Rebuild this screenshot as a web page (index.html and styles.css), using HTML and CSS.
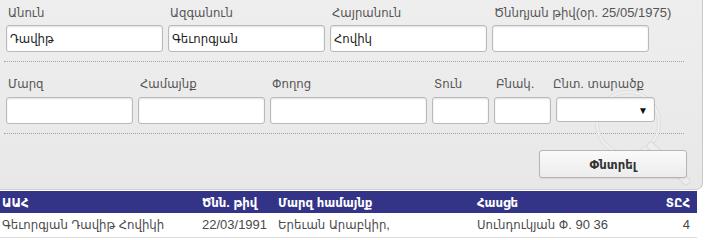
FILE: index.html
```html
<!DOCTYPE html>
<html lang="hy">
<head>
<meta charset="utf-8">
<title>Որոնում</title>
<link rel="stylesheet" href="styles.css">
</head>
<body>
<div class="panel">
  <svg class="watermark" width="110" height="110" viewBox="0 0 110 110" aria-hidden="true">
    <circle cx="40" cy="40" r="31" fill="none" stroke="#dadada" stroke-width="4"/>
    <circle cx="40" cy="40" r="31" fill="none" stroke="#f2f2f2" stroke-width="2"/>
    <line x1="63" y1="63" x2="98" y2="98" stroke="#dadada" stroke-width="9" stroke-linecap="round"/>
    <line x1="63" y1="63" x2="98" y2="98" stroke="#efefef" stroke-width="6" stroke-linecap="round"/>
  </svg>
  <div class="row row1">
    <div class="field w157"><label>Անուն</label><div class="input">Դավիթ</div></div>
    <div class="field w157"><label>Ազգանուն</label><div class="input">Գեւորգյան</div></div>
    <div class="field w157"><label>Հայրանուն</label><div class="input">Հովիկ</div></div>
    <div class="field w157"><label>Ծննդյան թիվ(օր. 25/05/1975)</label><div class="input"></div></div>
  </div>
  <div class="sep"></div>
  <div class="row row2">
    <div class="field w127"><label>Մարզ</label><div class="input"></div></div>
    <div class="field w127"><label>Համայնք</label><div class="input"></div></div>
    <div class="field w157"><label>Փողոց</label><div class="input"></div></div>
    <div class="field w57"><label>Տուն</label><div class="input"></div></div>
    <div class="field w57"><label>Բնակ.</label><div class="input"></div></div>
    <div class="field w99"><label class="sel-label">Ընտ. տարածք</label><div class="select"><span class="arrow">▼</span></div></div>
  </div>
  <div class="sep"></div>
  <div class="actions"><button class="btn">Փնտրել</button></div>
</div>
<table class="results">
  <colgroup>
    <col class="c1"><col class="c2"><col class="c3"><col class="c4"><col class="c5">
  </colgroup>
  <thead>
    <tr><th>ԱԱՀ</th><th>Ծնն. թիվ</th><th>Մարզ համայնք</th><th>Հասցե</th><th class="num">ՏԸՀ</th></tr>
  </thead>
  <tbody>
    <tr><td>Գեւորգյան Դավիթ Հովիկի</td><td>22/03/1991</td><td>Երեւան Արաբկիր,</td><td>Սունդուկյան Փ. 90 36</td><td class="num">4</td></tr>
  </tbody>
</table>
</body>
</html>
```
FILE: styles.css
```css
* { box-sizing: border-box; }
body {
  margin: 0;
  font-family: "Liberation Sans", "DejaVu Sans Condensed", "DejaVu Sans", sans-serif;
  font-size: 13px;
  color: #444;
  background: #fff;
}
.panel {
  position: relative;
  width: 703px;
  height: 190px;
  background: linear-gradient(#eeeeee, #e8e8e8);
  border-right: 1px solid #c8c8c8;
  border-bottom: 1px solid #cfcfcf;
  border-bottom-right-radius: 7px;
  overflow: hidden;
}
.watermark {
  position: absolute;
  left: 588px;
  top: 83px;
  opacity: 0.75;
}
.row {
  position: relative;
  display: flex;
  gap: 5px;
  padding-left: 6px;
}
.row1 { padding-top: 5px; padding-bottom: 9px; }
.row2 { padding-top: 14px; padding-bottom: 9px; }
.field { display: flex; flex-direction: column; }
.field label {
  display: block;
  height: 16px;
  line-height: 16px;
  padding-left: 2px;
  color: #555;
  white-space: nowrap;
}
.row1 .field label { margin-bottom: 4px; }
.row2 .field label { margin-bottom: 5px; }
.sel-label { margin-left: -5px; }
.w157 { width: 157px; }
.w127 { width: 127px; }
.w57 { width: 57px; }
.w99 { width: 99px; }
.input, .select {
  height: 27px;
  line-height: 25px;
  background: #fff;
  border: 1px solid #b9b9b9;
  border-radius: 3px;
  box-shadow: inset 0 1px 2px rgba(0,0,0,0.12);
  padding-left: 3px;
  color: #222;
}
.select {
  height: 25px;
  line-height: 23px;
  position: relative;
  text-align: right;
  padding-right: 6px;
}
.arrow { font-size: 10px; color: #111; }
.sep {
  margin: 0 18px 0 4px;
  border-top: 1px dotted #a3a3a3;
}
.actions {
  position: relative;
  display: flex;
  justify-content: flex-end;
  padding: 16px 15px 0 0;
}
.btn {
  width: 148px;
  height: 28px;
  font-family: inherit;
  font-size: 13px;
  font-weight: bold;
  color: #333;
  background: linear-gradient(#fafafa, #ececec);
  border: 1px solid #b5b5b5;
  border-radius: 3px;
  box-shadow: 0 1px 1px rgba(0,0,0,0.08);
}
.results {
  margin-top: 1px;
  width: 697px;
  border-collapse: collapse;
  table-layout: fixed;
}
.c1 { width: 200px; }
.c2 { width: 76px; }
.c3 { width: 199px; }
.c4 { width: 150px; }
.c5 { width: 72px; }
.results th {
  background: #333388;
  color: #fff;
  font-weight: bold;
  text-align: left;
  height: 22px;
  padding: 0 2px;
  white-space: nowrap;
}
.results td {
  height: 24px;
  padding: 0 2px;
  color: #4a4a4a;
  border-bottom: 1px solid #dcdcdc;
  white-space: nowrap;
}
.results .num { text-align: right; padding-right: 7px; }
```
